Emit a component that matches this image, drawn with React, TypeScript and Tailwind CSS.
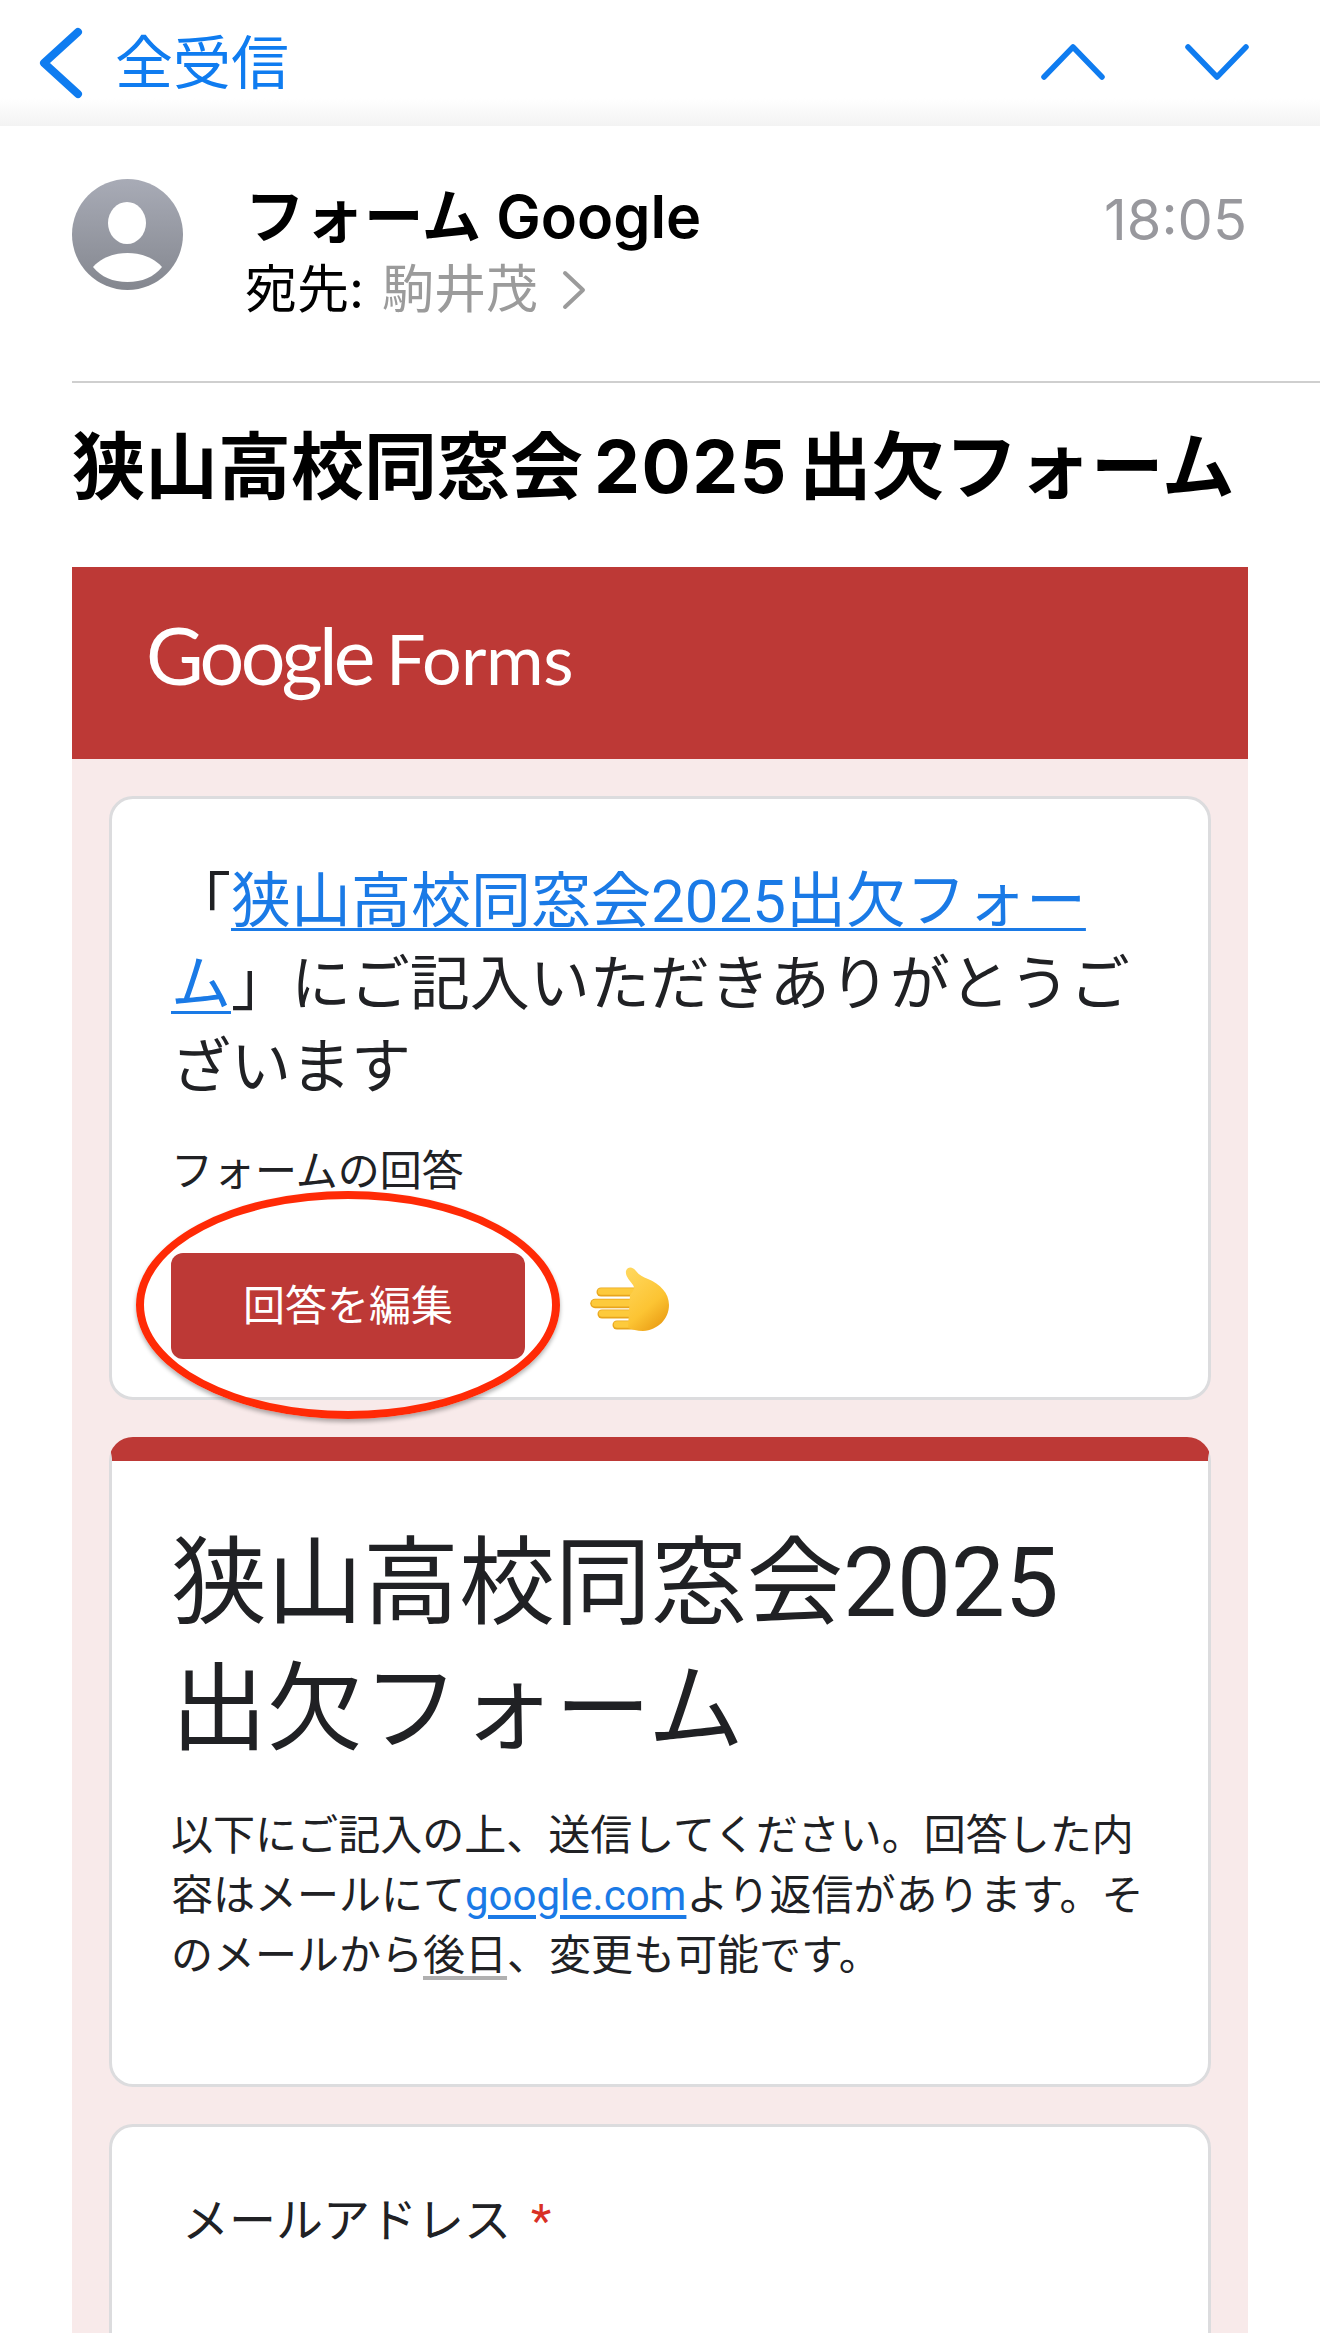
const jp = "font-['Inter','Noto_Sans_CJK_JP',sans-serif]";
const formFont = "font-['Roboto','Noto_Sans_CJK_JP',sans-serif]";

function Avatar() {
  return (
    <svg viewBox="0 0 111 111" className="h-[111px] w-[111px] shrink-0" aria-hidden="true">
      <defs>
        <linearGradient id="avatar-bg" x1="0" y1="0" x2="0" y2="1">
          <stop offset="0" stopColor="#a8abb6" />
          <stop offset="1" stopColor="#84878f" />
        </linearGradient>
      </defs>
      <circle cx="55.5" cy="55.5" r="55.5" fill="url(#avatar-bg)" />
      <ellipse cx="55" cy="44" rx="19" ry="21" fill="#fff" />
      <path d="M21 88C29 79 41 74 55.5 74S82 79 90 88C82 98 70 103 55.5 103S29 98 21 88Z" fill="#fff" />
    </svg>
  );
}

function HandEmoji() {
  return (
    <svg viewBox="0 0 100 84" className="mb-[12px] ml-[55px] h-[84px] w-[100px] shrink-0" aria-hidden="true">
      <defs>
        <linearGradient id="hand" x1="0.2" y1="0" x2="0.8" y2="1">
          <stop offset="0" stopColor="#ffd65a" />
          <stop offset="0.6" stopColor="#fcc433" />
          <stop offset="1" stopColor="#e99a12" />
        </linearGradient>
      </defs>
      <g fill="none" strokeLinecap="round" stroke="#e8a51c">
        <path d="M21 34H60" strokeWidth="9" />
        <path d="M15 45.5H60" strokeWidth="9.5" />
        <path d="M22 56H60" strokeWidth="9" />
        <path d="M37 67H62" strokeWidth="9" />
      </g>
      <g fill="none" strokeLinecap="round" stroke="#fdca3c">
        <path d="M21 33.5H60" strokeWidth="6.5" />
        <path d="M15 45H60" strokeWidth="7" />
        <path d="M22 55.5H60" strokeWidth="6.5" />
        <path d="M37 66.5H62" strokeWidth="6.5" />
      </g>
      <path
        d="M46 13C48 8 53 9 56 13C59 17 63 19 68 21C80 26 89 35 89 47C89 61 78 72 63 73C57 73 52 71 48 70L50 37C54 33 55 30 53 27C50 23 45 18 46 13Z"
        fill="url(#hand)"
      />
    </svg>
  );
}

export default function App() {
  return (
    <div className={`h-[2333px] w-[1320px] overflow-hidden bg-white ${jp}`}>
      {/* ナビバー */}
      <header className="flex h-[126px] items-center justify-between bg-gradient-to-b from-white from-[78%] to-[#f3f3f3] pl-[34px] pr-[70px] text-[#0f7cf0]">
        <div className="flex items-center">
          <svg viewBox="0 0 52 72" className="-mt-[1px] h-[72px] w-[52px] shrink-0" fill="none" stroke="currentColor" strokeWidth="8" strokeLinecap="round" strokeLinejoin="round" aria-hidden="true">
            <path d="M44 5L10 36L44 67" />
          </svg>
          <span className="-mt-[1px] ml-[29px] text-[58px] leading-none">全受信</span>
        </div>
        <div className="flex items-center gap-[78px] pb-[3px]">
          <svg viewBox="0 0 66 38" className="h-[38px] w-[66px]" fill="none" stroke="currentColor" strokeWidth="5.5" strokeLinecap="round" strokeLinejoin="round" aria-hidden="true">
            <path d="M4 34L33 4L62 34" />
          </svg>
          <svg viewBox="0 0 66 38" className="h-[38px] w-[66px]" fill="none" stroke="currentColor" strokeWidth="5.5" strokeLinecap="round" strokeLinejoin="round" aria-hidden="true">
            <path d="M4 4L33 34L62 4" />
          </svg>
        </div>
      </header>

      {/* 差出人 */}
      <div className="flex h-[257px] flex-col pl-[72px]">
        <div className="flex flex-1 items-start pt-[53px]">
          <Avatar />
          <div className="ml-[62px] flex-1">
            <div className="pt-[2px] text-[59.5px] font-semibold leading-[70px] text-black">フォーム Google</div>
            <div className="mt-[9px] flex items-center text-[52px] leading-[60px] text-black">
              宛先:
              <span className="ml-[18px] text-[#9b9b9b]">駒井茂</span>
              <svg viewBox="0 0 26 40" className="ml-[23px] h-[40px] w-[26px] text-[#9b9b9b]" fill="none" stroke="currentColor" strokeWidth="4" strokeLinecap="round" strokeLinejoin="round" aria-hidden="true">
                <path d="M4 3L22 20L4 37" />
              </svg>
            </div>
          </div>
          <div className="mr-[73px] mt-[6px] text-[56px] leading-[70px] text-[#98989d]">18:05</div>
        </div>
        <div className="h-[2px] bg-[#cfcfcf]" />
      </div>

      {/* 件名 */}
      <h1 className="mt-[39px] whitespace-nowrap pl-[72px] text-[73px] font-bold leading-[90px] text-black">
        狭山高校同窓会<span className="mx-[11px] tracking-[1.5px]">2025</span>出欠フォーム
      </h1>

      {/* メール本文 */}
      <div className="ml-[72px] mt-[55px] w-[1176px]">
        <div className="flex h-[192px] items-start bg-[#bd3936] pl-[74px] pt-[43px] font-['Lato',sans-serif] text-white">
          <span className="text-[79px] leading-[90px] tracking-[-3.7px]">Google</span>
          <span className="ml-[14px] mt-[7px] text-[70px] leading-[82px] tracking-[-0.5px]">Forms</span>
        </div>

        <div className={`flex flex-col gap-[37px] bg-[#f8eaea] px-[37px] pt-[37px] ${formFont}`}>
          <section className="h-[604px] rounded-[24px] border-[3px] border-[#dcdcde] bg-white pl-[59px] pt-[61px] text-[#202124]">
            <p className="text-[60px] leading-[83px]">
              「<a className="text-[#1a7ae6] underline decoration-[3px] underline-offset-[6px]">狭山高校同窓会2025出欠フォー<br />ム</a>」にご記入いただきありがとうご<br />ざいます
            </p>
            <p className="mt-[33px] text-[42px] leading-[60px]">フォームの回答</p>
            <div className="relative mt-[51px] flex items-center">
              <button className="flex h-[106px] w-[354px] items-center justify-center rounded-[12px] bg-[#bd3936] text-[42px] text-white">
                回答を編集
              </button>
              <HandEmoji />
              {/* 赤丸の書き込み */}
              <span className="absolute -left-[35px] -top-[62px] h-[228px] w-[424px] rounded-[50%] border-[8px] border-[#ff2a06] shadow-[0_3px_4px_rgba(0,0,0,0.3)]" />
            </div>
          </section>

          <section className="h-[650px] rounded-[24px] border-x-[3px] border-b-[3px] border-t-[24px] border-[#dcdcde] border-t-[#bd3936] bg-white pl-[59px] pt-[59px] text-[#202124]">
            <h2 className="text-[96px] font-normal leading-[126px]">
              狭山高校同窓会2025<br />出欠フォーム
            </h2>
            <p className="mt-[34px] text-[42px] leading-[60px]">
              以下にご記入の上、送信してください。回答した内<br />
              容はメールにて<a className="text-[#1a7ae6] underline underline-offset-[5px]">google.com</a>より返信があります。そ<br />
              のメールから<span className="underline decoration-[#b0b0b0] underline-offset-[6px]">後日</span>、変更も可能です。
            </p>
          </section>

          <section className="h-[400px] rounded-[24px] border-[3px] border-[#dcdcde] bg-white pl-[70px] pt-[62px] text-[#202124]">
            <p className="text-[47px] leading-[64px]">
              メールアドレス<span className="ml-[20px] text-[#d93025]">*</span>
            </p>
          </section>
        </div>
      </div>
    </div>
  );
}
